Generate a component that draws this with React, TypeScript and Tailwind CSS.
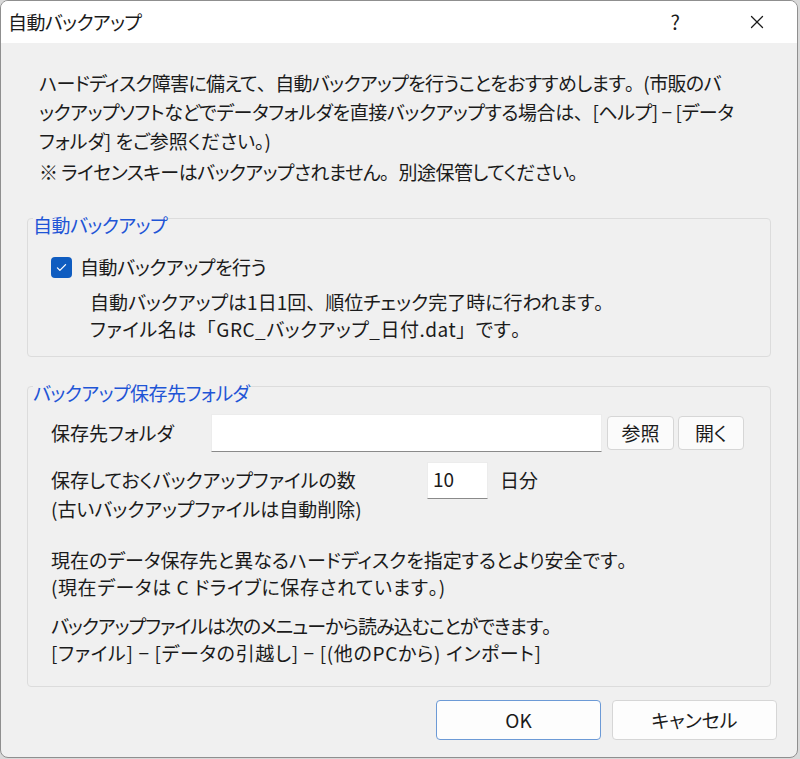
import { X } from "lucide-react";

const jp = "[font-family:'Noto_Sans_CJK_JP','Noto_Sans',sans-serif] [font-feature-settings:'palt']";

// proportional kana, but keep the full-width punctuation as the original dialog does
function T({ children }: { children: string }) {
  const parts = children.split(/([、。「」])/);
  return (
    <>
      {parts.map((p, i) =>
        /^[、。「」]$/.test(p) ? (
          <span key={i} className="[font-feature-settings:normal]">{p}</span>
        ) : (
          p
        )
      )}
    </>
  );
}

function GroupBox({ title, className, children }: { title: string; className?: string; children: React.ReactNode }) {
  return (
    <div className={`mx-[26px] rounded-[4px] border border-[#dcdcdc] ${className ?? ""}`}>
      <div className="-mt-[7px] ml-[5px] w-fit bg-[#f0f0f0] text-[19px] leading-[26px] tracking-[-0.5px] text-[#1f55d6]">{title}</div>
      {children}
    </div>
  );
}

export default function App() {
  return (
    <div className={`h-[759px] w-[800px] bg-[#d9d9d9] text-[#1b1b1b] ${jp}`}>
      <div className="flex h-[758px] w-[798px] flex-col overflow-hidden rounded-[8px] border border-[#8f8f8f] bg-[#f0f0f0]">
        {/* title bar */}
        <div className="flex h-[42px] shrink-0 items-center bg-white">
          <span className="ml-[7px] text-[19px] tracking-[-0.6px]">自動バックアップ</span>
          <span className="ml-auto mr-[66px] text-[20px]">?</span>
          <X className="mr-[29px] h-[22px] w-[22px]" strokeWidth={1.4} />
        </div>

        {/* intro */}
        <div className="whitespace-nowrap pl-[38px] pt-[25px] text-[19px] leading-[29px]">
          <p className="tracking-[-0.65px]"><T>ハードディスク障害に備えて、自動バックアップを行うことをおすすめします。(市販のバ</T></p>
          <p className="tracking-[-0.4px]"><T>ックアップソフトなどでデータフォルダを直接バックアップする場合は、[ヘルプ] − [データ</T></p>
          <p><T>フォルダ] をご参照ください。)</T></p>
          <p className="mt-[2px] tracking-[-0.55px]"><T>※ ライセンスキーはバックアップされません。別途保管してください。</T></p>
        </div>

        {/* auto backup */}
        <GroupBox title="自動バックアップ" className="mt-[32px] pb-[14px]">
          <div className="ml-[23px] mt-[17px] flex h-[24px] items-center gap-[8px] text-[19px]">
            <span className="flex h-[21px] w-[21px] items-center justify-center rounded-[4px] bg-[#0f5cc0]">
              <svg viewBox="0 0 16 16" className="h-[13px] w-[13px]" fill="none" stroke="white" strokeWidth="1.6" strokeLinecap="round" strokeLinejoin="round">
                <path d="M3 8.5l3 3 7-7" />
              </svg>
            </span>
            <span className="tracking-[-0.4px]">自動バックアップを行う</span>
          </div>
          <div className="ml-[62px] mt-[9px] whitespace-nowrap text-[19px] leading-[27px]">
            <p><T>自動バックアップは1日1回、順位チェック完了時に行われます。</T></p>
            <p className="tracking-[0.5px]"><T>ファイル名は「GRC_バックアップ_日付.dat」です。</T></p>
          </div>
        </GroupBox>

        {/* destination */}
        <GroupBox title="バックアップ保存先フォルダ" className="mt-[29px] pb-[20px]">
          <div className="ml-[23px] mt-[8px] flex items-center text-[19px]">
            <span className="w-[160px]">保存先フォルダ</span>
            <div className="h-[38px] w-[391px] border border-[#ececec] border-b-[#8a8a8a] bg-white" />
            <button className="ml-[5px] h-[34px] w-[67px] rounded-[4px] border border-[#d6d6d6] bg-[#fbfbfb] text-[19px]">参照</button>
            <button className="ml-[4px] h-[34px] w-[66px] rounded-[4px] border border-[#d6d6d6] bg-[#fbfbfb] text-[19px]">開く</button>
          </div>
          <div className="ml-[23px] mt-[10px] flex items-center text-[19px]">
            <span className="w-[376px]">保存しておくバックアップファイルの数</span>
            <div className="flex h-[37px] w-[61px] items-center border border-[#ececec] border-b-[#8a8a8a] bg-white pb-[3px] pl-[5px]">10</div>
            <span className="ml-[12px]">日分</span>
          </div>
          <div className="-mt-[4px] ml-[23px] whitespace-nowrap text-[19px] leading-[27px]">
            <p>(古いバックアップファイルは自動削除)</p>
            <p className="mt-[24px]"><T>現在のデータ保存先と異なるハードディスクを指定するとより安全です。</T></p>
            <p className="tracking-[0.6px]"><T>(現在データは C ドライブに保存されています。)</T></p>
            <p className="mt-[12px] tracking-[-1px]"><T>バックアップファイルは次のメニューから読み込むことができます。</T></p>
            <p className="tracking-[0.65px]">[ファイル] − [データの引越し] − [(他のPCから) インポート]</p>
          </div>
        </GroupBox>

        {/* buttons */}
        <div className="mr-[20px] mt-[13px] flex justify-end gap-[11px] text-[19px]">
          <button className="h-[40px] w-[165px] rounded-[4px] border border-[#6c9ad6] bg-[#fdfdfd]">OK</button>
          <button className="h-[40px] w-[165px] rounded-[4px] border border-[#d6d6d6] bg-[#fdfdfd]">キャンセル</button>
        </div>
      </div>
    </div>
  );
}
